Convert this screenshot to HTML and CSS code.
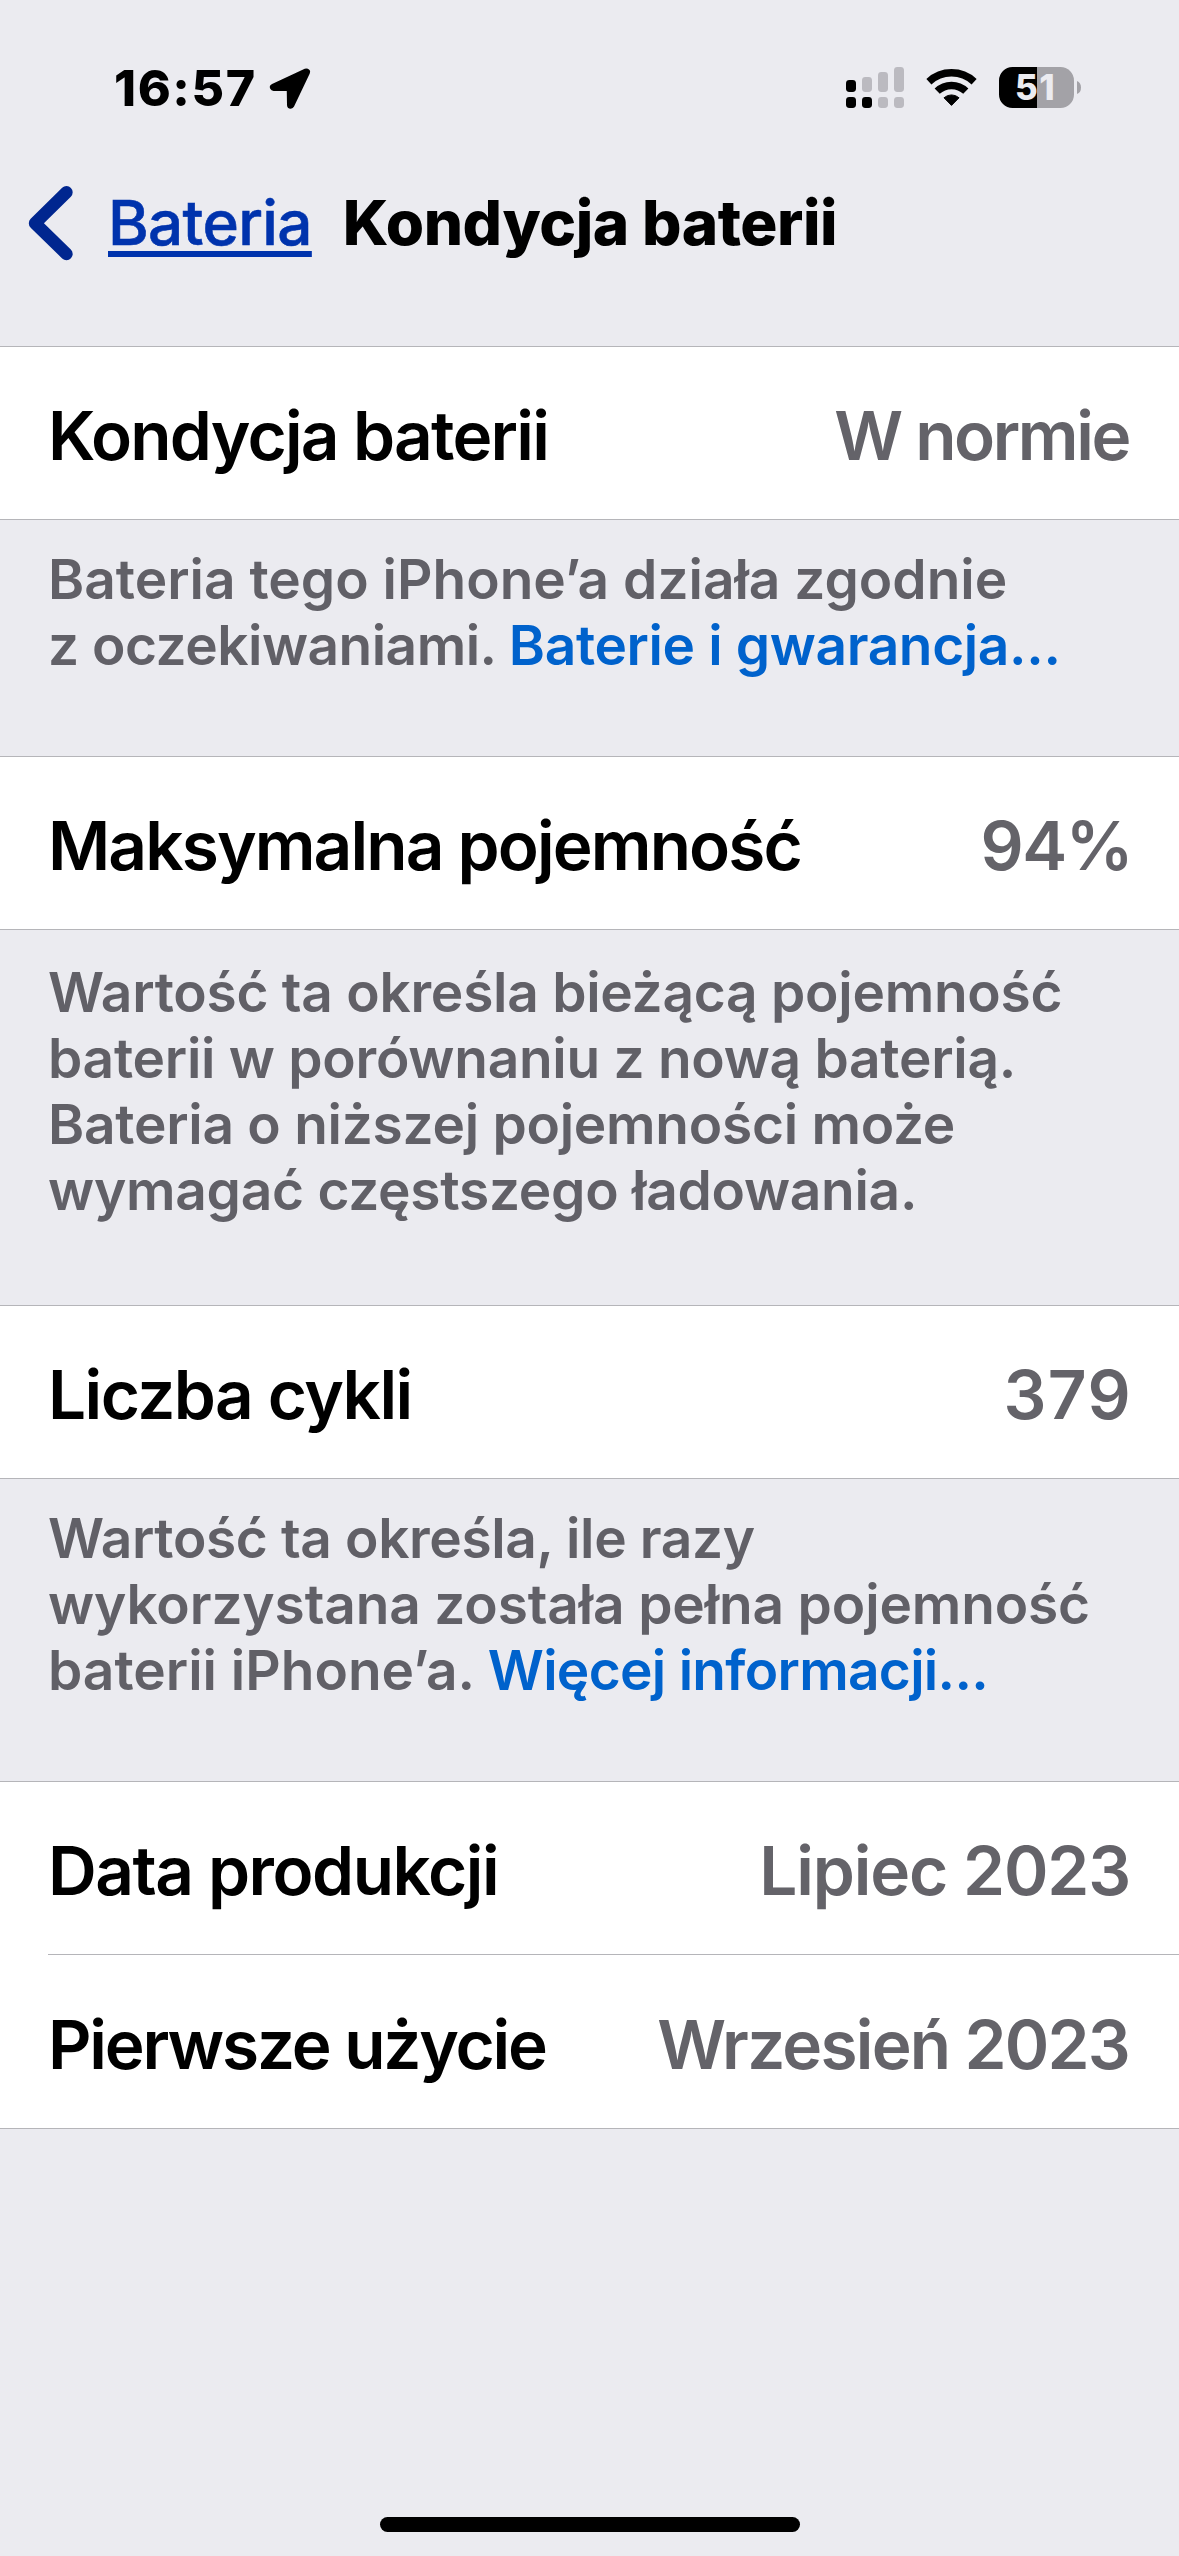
FILE: index.html
```
<!DOCTYPE html>
<html lang="pl">
<head>
<meta charset="utf-8">
<title>Kondycja baterii</title>
<link rel="stylesheet" href="styles.css">
</head>
<body>
<div class="screen">
  <header class="status-bar">
    <div class="status-left">
      <span class="clock">16:57</span>
      <svg class="location" width="44" height="42" viewBox="0 0 44 42">
        <path d="M38.3 5.2 5.6 20.3H22.4L22.7 38Z" fill="#000" stroke="#000" stroke-width="7.4" stroke-linejoin="round"/>
      </svg>
    </div>
    <div class="status-right">
      <svg width="58" height="42" viewBox="0 0 58 42">
        <g fill="#000">
          <rect x="0" y="13" width="10" height="12" rx="3.4"/>
          <rect x="0" y="30" width="10" height="11" rx="3.4"/>
          <rect x="16" y="30" width="10" height="11" rx="3.4"/>
        </g>
        <g fill="#bbbac0">
          <rect x="16" y="10" width="10" height="15" rx="3.4"/>
          <rect x="32" y="5" width="10" height="20" rx="3.4"/>
          <rect x="48" y="0" width="10" height="25" rx="3.4"/>
          <rect x="32" y="30" width="10" height="11" rx="3.4"/>
          <rect x="48" y="30" width="10" height="11" rx="3.4"/>
        </g>
      </svg>
      <svg width="51" height="42" viewBox="0 0 51 42">
        <path d="M2.9 14.7A33.2 33.2 0 0 1 48.1 14.7M11.2 24.2A20.6 20.6 0 0 1 39.8 24.2" fill="none" stroke="#000" stroke-width="7.4"/>
        <path d="M25.5 38.4 18 30.8A11.2 11.2 0 0 1 33 30.8Z" fill="#000" stroke="#000" stroke-width="1" stroke-linejoin="round"/>
      </svg>
      <svg width="82" height="42" viewBox="0 0 82 42">
        <path d="M38 0H61.5A13.5 13.5 0 0 1 75 13.5V27.5A13.5 13.5 0 0 1 61.5 41H38Z" fill="#a3a2a7"/>
        <path d="M38 0H13.5A13.5 13.5 0 0 0 0 13.5V27.5A13.5 13.5 0 0 0 13.5 41H38Z" fill="#000"/>
        <path d="M78 14Q82 15.5 82 20.5T78 27Z" fill="#a3a2a7"/>
        <text class="charge" x="16" y="33">51</text>
      </svg>
    </div>
  </header>

  <nav class="nav">
    <svg class="chevron" width="50" height="76" viewBox="0 0 50 76">
      <path d="M41.5 7.3 10 38.2 41.5 69" fill="none" stroke="#00268f" stroke-width="12.4" stroke-linecap="round" stroke-linejoin="round"/>
    </svg>
    <a class="back">Bateria</a>
    <h1 class="title">Kondycja baterii</h1>
  </nav>

  <main>
    <section class="group">
      <div class="row"><span class="label t178">Kondycja baterii</span><span class="value t259">W normie</span></div>
    </section>
    <p class="note note-health">Bateria tego iPhone’a działa zgodnie<br><span class="t50">z oczekiwaniami. </span><a class="link t37">Baterie i gwarancja...</a></p>

    <section class="group">
      <div class="row"><span class="label t190">Maksymalna pojemność</span><span class="value t150">94%</span></div>
    </section>
    <p class="note note-capacity t26">Wartość ta określa bieżącą pojemność<br>baterii w porównaniu z nową baterią.<br>Bateria o niższej pojemności może<br>wymagać częstszego ładowania.</p>

    <section class="group">
      <div class="row"><span class="label t157">Liczba cykli</span><span class="value w141">379</span></div>
    </section>
    <p class="note note-cycles"><span class="t37">Wartość ta określa, ile razy</span><br><span class="t14">wykorzystana została pełna pojemność</span><br>baterii iPhone’a. <a class="link t70">Więcej informacji...</a></p>

    <section class="group">
      <div class="row"><span class="label t149">Data produkcji</span><span class="value t115">Lipiec 2023</span></div>
      <div class="row"><span class="label t222">Pierwsze użycie</span><span class="value t178">Wrzesień 2023</span></div>
    </section>
  </main>
  <div class="home-indicator"></div>
</div>
</body>
</html>
```
FILE: styles.css
```
* { box-sizing: border-box; }

body {
  margin: 0;
  background: #ebebf0;
  color: #000;
  font-family: Inter, "Liberation Sans", sans-serif;
}

.screen {
  width: 1179px;
  height: 2556px;
  display: flex;
  flex-direction: column;
  overflow: hidden;
}

svg { display: block; flex: none; }

/* Status bar */
.status-bar {
  height: 118px;
  padding: 58px 98px 0 114px;
  display: flex;
  justify-content: space-between;
  align-items: center;
}
.status-left, .status-right { display: flex; align-items: center; }
.status-right { gap: 22px; }
.clock {
  width: 154px;
  font-size: 50px;
  line-height: 60px;
  font-weight: 800;
  letter-spacing: 1.6px;
}
.charge {
  font-size: 35px;
  font-weight: 800;
  letter-spacing: 1.5px;
  fill: #ebebf0;
}

/* Navigation */
.nav {
  height: 76px;
  margin: 67px 0 85px;
  padding-left: 25px;
  display: flex;
}
.back {
  margin-left: 33px;
  font-size: 62px;
  line-height: 75px;
  font-weight: 500;
  letter-spacing: -0.66px;
  color: #0033ad;
  -webkit-text-stroke: 0.6px currentColor;
  text-decoration: underline;
  text-decoration-thickness: 6px;
  text-underline-offset: 6px;
  text-decoration-skip-ink: none;
}
.title {
  margin: 0 0 0 31px;
  font-size: 62px;
  line-height: 75px;
  font-weight: 800;
  letter-spacing: -0.45px;
}

/* Grouped rows */
.group {
  background: #fff;
  border-top: 1px solid #b5b5b9;
  border-bottom: 1px solid #b5b5b9;
}
.row {
  height: 172px;
  padding: 5px 48px 0 48px;
  display: flex;
  justify-content: space-between;
  align-items: center;
  font-size: 67.5px;
  font-weight: 600;
  white-space: nowrap;
}
.row + .row {
  height: 174px;
  margin-left: 48px;
  padding-left: 0;
  border-top: 1px solid #b5b5b9;
}
.value { color: #646369; }

/* Explanations under groups */
.note {
  margin: 0;
  padding: 26px 48px 0;
  font-size: 55px;
  line-height: 66px;
  font-weight: 600;
  color: #616067;
  white-space: nowrap;
}
.note-health { height: 236px; }
.note-capacity { height: 375px; padding-top: 29px; }
.note-cycles { height: 302px; }
.link { color: #0062cc; }

/* Tracking */
.t14 { letter-spacing: -0.14px; }
.t26 { letter-spacing: -0.26px; }
.t37 { letter-spacing: -0.37px; }
.t50 { letter-spacing: -0.5px; }
.t70 { letter-spacing: -0.7px; }
.t115 { letter-spacing: -1.15px; }
.t149 { letter-spacing: -1.49px; }
.t150 { letter-spacing: -1.5px; }
.t157 { letter-spacing: -1.57px; }
.t178 { letter-spacing: -1.78px; }
.t190 { letter-spacing: -1.9px; }
.t222 { letter-spacing: -2.22px; }
.t259 { letter-spacing: -2.4px; }
.w141 { letter-spacing: 1.41px; }
.value.t115 { margin-right: 1px; }
.value.t150 { margin-right: -1px; }
.value.t178 { margin-right: 2px; }
.value.t259 { margin-right: 2px; }
.value.w141 { margin-right: -1px; }

.home-indicator {
  width: 420px;
  height: 15px;
  margin: auto auto 24px;
  border-radius: 8px;
  background: #000;
}
```
